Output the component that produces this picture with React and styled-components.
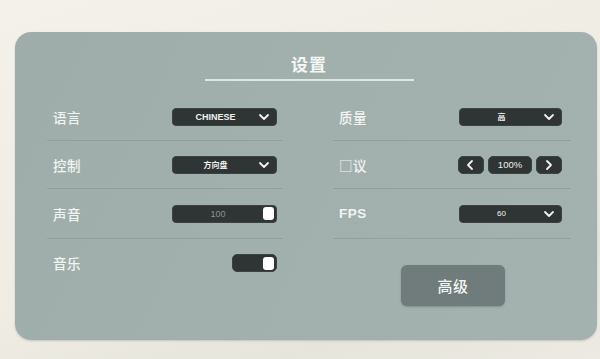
import React from "react";
import styled, { createGlobalStyle } from "styled-components";

const GlobalStyle = createGlobalStyle`
  html, body {
    margin: 0;
    padding: 0;
    width: 600px;
    height: 359px;
    overflow: hidden;
  }
  body {
    font-family: "Noto Sans CJK SC", "Noto Sans", sans-serif;
    background: linear-gradient(160deg, #f3f1e9 0%, #eeece3 55%, #e6e5dc 80%, #eceae2 100%);
  }
`;

const Screen = styled.div`
  width: 600px;
  height: 359px;
  box-sizing: border-box;
  padding: 32px 3px 0 15px;
`;

const Panel = styled.div`
  height: 308px;
  box-sizing: border-box;
  border-radius: 16px;
  background: linear-gradient(115deg, #9fadaa 0%, #a2b0ad 45%, #a4b2af 100%);
  box-shadow: 0 1px 2px rgba(120, 130, 125, 0.35);
  padding: 19px 26px 0 32px;
  display: flex;
  flex-direction: column;
`;

const TitleWrap = styled.div`
  display: flex;
  flex-direction: column;
  align-items: center;
  height: 42px;
`;

const Title = styled.div`
  color: #f4f6f4;
  font-size: 17px;
  font-weight: 700;
  line-height: 26px;
  letter-spacing: 1px;
`;

const TitleLine = styled.div`
  margin-top: 2px;
  width: 209px;
  height: 2px;
  background: #dfe6e3;
`;

const Columns = styled.div`
  display: grid;
  grid-template-columns: 236px 238px;
  column-gap: 50px;
`;

const Column = styled.div`
  display: flex;
  flex-direction: column;
`;

const Row = styled.div`
  height: ${({ $tall }) => ($tall ? 50 : 48)}px;
  box-sizing: border-box;
  display: flex;
  align-items: center;
  justify-content: space-between;
  padding: 0 ${({ $inset }) => $inset}px 0 6px;
  border-bottom: ${({ $last }) => ($last ? "none" : "1px solid #92a09d")};
`;

const Label = styled.span`
  color: #f1f4f2;
  font-size: 13.5px;
  font-family: ${({ $latin }) =>
    $latin ? '"Liberation Sans", Arial, sans-serif' : '"Noto Sans CJK SC", sans-serif'};
  font-weight: ${({ $latin }) => ($latin ? 700 : 500)};
  letter-spacing: 0.5px;
`;

const Select = styled.div`
  width: ${({ $w }) => $w}px;
  height: 18px;
  box-sizing: border-box;
  border-radius: 4px;
  background: #2f3534;
  border: 1px solid #3c4241;
  display: flex;
  align-items: center;
  padding: 0 6px 0 0;
  color: #eef0ef;
`;

const SelectText = styled.span`
  flex: 1;
  text-align: center;
  font-family: "Liberation Sans", "Noto Sans CJK SC", sans-serif;
  font-size: ${({ $small }) => ($small ? "8px" : "9px")};
  font-weight: ${({ $thin }) => ($thin ? 400 : 700)};
`;

const Slider = styled.div`
  width: 105px;
  height: 18px;
  box-sizing: border-box;
  border-radius: 4px;
  background: #2f3534;
  border: 1px solid #3c4241;
  display: flex;
  align-items: center;
  padding: 0 2px 0 0;
`;

const SliderValue = styled.span`
  flex: 1;
  text-align: center;
  color: #8d9391;
  font-family: "Liberation Sans", sans-serif;
  font-size: 9px;
`;

const Knob = styled.div`
  width: 11px;
  height: 13px;
  border-radius: 3px;
  background: #ffffff;
`;

const Toggle = styled.div`
  width: 45px;
  height: 18px;
  box-sizing: border-box;
  border-radius: 5px;
  background: #2f3534;
  border: 1px solid #3c4241;
  display: flex;
  align-items: center;
  justify-content: flex-end;
  padding: 0 2px;
`;

const Stepper = styled.div`
  display: flex;
  align-items: center;
  gap: 4px;
`;

const StepButton = styled.div`
  width: ${({ $wide }) => ($wide ? "44px" : "26px")};
  height: 18px;
  border-radius: 5px;
  background: #2f3534;
  border: 1px solid #3c4241;
  box-sizing: border-box;
  display: flex;
  align-items: center;
  justify-content: center;
  color: #eef0ef;
  font-family: "Liberation Sans", sans-serif;
  font-size: 9.5px;
`;

const ButtonRow = styled.div`
  display: flex;
  padding: 26px 0 0 68px;
`;

const BigButton = styled.div`
  width: 104px;
  height: 41px;
  border-radius: 6px;
  background: #6f7c7b;
  box-shadow: 0 1px 2px rgba(70, 80, 78, 0.35);
  display: flex;
  align-items: center;
  justify-content: center;
  color: #f3f5f4;
  font-size: 15px;
  font-weight: 500;
  letter-spacing: 0.5px;
`;

const Chevron = ({ dir = "down" }) => {
  const d = {
    down: "M2 4 L6 8 L10 4",
    left: "M7 2 L3 6 L7 10",
    right: "M4 2 L8 6 L4 10",
  }[dir];
  return (
    <svg width="12" height="12" viewBox="0 0 12 12">
      <path d={d} fill="none" stroke="#f2f4f3" strokeWidth="1.8" strokeLinecap="round" strokeLinejoin="round" />
    </svg>
  );
};

const Dropdown = ({ value, small, thin, width = 105 }) => (
  <Select $w={width}>
    <SelectText $small={small} $thin={thin}>{value}</SelectText>
    <Chevron />
  </Select>
);

export default function App() {
  return (
    <>
      <GlobalStyle />
      <Screen>
        <Panel>
          <TitleWrap>
            <Title>设置</Title>
            <TitleLine />
          </TitleWrap>
          <Columns>
            <Column>
              <Row $inset={6}>
                <Label>语言</Label>
                <Dropdown value="CHINESE" />
              </Row>
              <Row $inset={6}>
                <Label>控制</Label>
                <Dropdown value="方向盘" small />
              </Row>
              <Row $inset={6} $tall>
                <Label>声音</Label>
                <Slider>
                  <SliderValue>100</SliderValue>
                  <Knob />
                </Slider>
              </Row>
              <Row $inset={6} $last>
                <Label>音乐</Label>
                <Toggle>
                  <Knob />
                </Toggle>
              </Row>
            </Column>
            <Column>
              <Row $inset={9}>
                <Label>质量</Label>
                <Dropdown value="高" small width={103} />
              </Row>
              <Row $inset={9}>
                <Label>□议</Label>
                <Stepper>
                  <StepButton><Chevron dir="left" /></StepButton>
                  <StepButton $wide>100%</StepButton>
                  <StepButton><Chevron dir="right" /></StepButton>
                </Stepper>
              </Row>
              <Row $inset={9} $tall>
                <Label $latin>FPS</Label>
                <Dropdown value="60" small thin width={103} />
              </Row>
              <ButtonRow>
                <BigButton>高级</BigButton>
              </ButtonRow>
            </Column>
          </Columns>
        </Panel>
      </Screen>
    </>
  );
}
